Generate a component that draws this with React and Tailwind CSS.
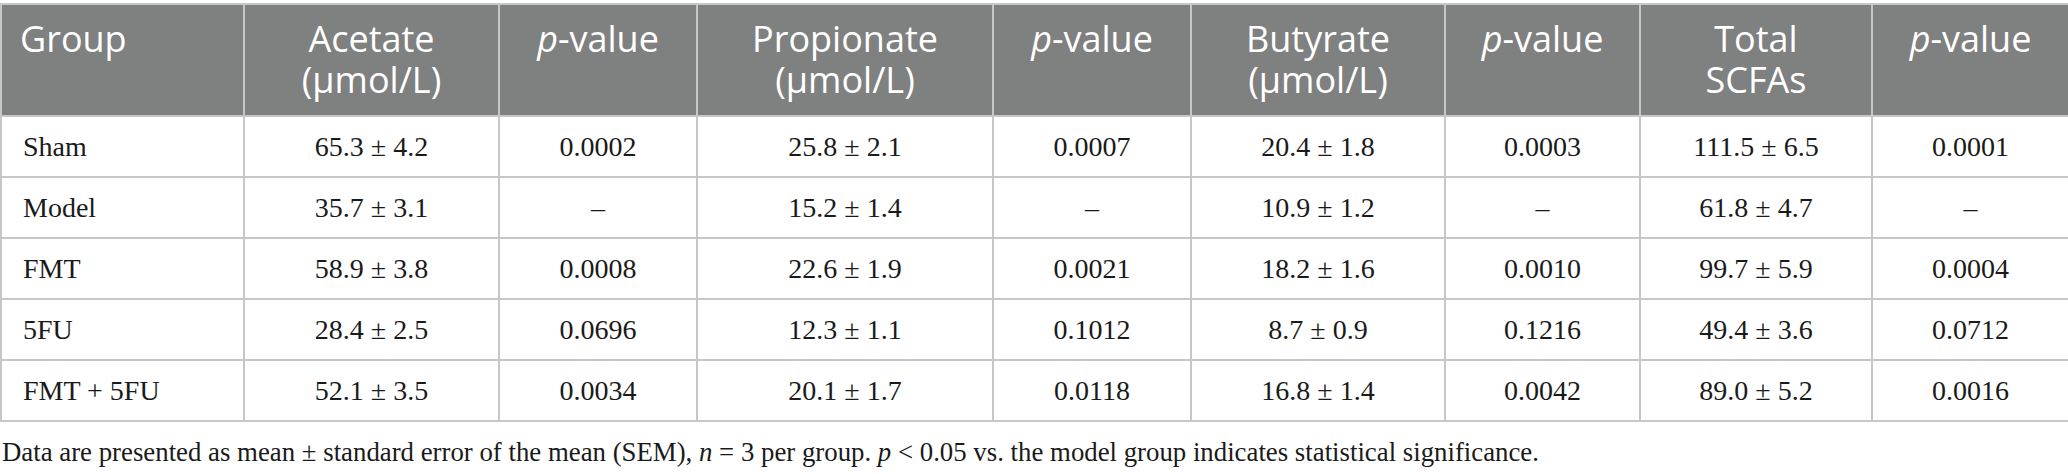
import React from 'react';

const cols = [243, 255, 198, 296, 198, 254, 195, 232, 197];

const headers = [
  { label: ['Group'], left: true },
  { label: ['Acetate', '(\u03bcmol/L)'] },
  { label: 'p' },
  { label: ['Propionate', '(\u03bcmol/L)'] },
  { label: 'p' },
  { label: ['Butyrate', '(\u03bcmol/L)'] },
  { label: 'p' },
  { label: ['Total', 'SCFAs'] },
  { label: 'p' },
];

const rows = [
  ['Sham', '65.3 ± 4.2', '0.0002', '25.8 ± 2.1', '0.0007', '20.4 ± 1.8', '0.0003', '111.5 ± 6.5', '0.0001'],
  ['Model', '35.7 ± 3.1', '–', '15.2 ± 1.4', '–', '10.9 ± 1.2', '–', '61.8 ± 4.7', '–'],
  ['FMT', '58.9 ± 3.8', '0.0008', '22.6 ± 1.9', '0.0021', '18.2 ± 1.6', '0.0010', '99.7 ± 5.9', '0.0004'],
  ['5FU', '28.4 ± 2.5', '0.0696', '12.3 ± 1.1', '0.1012', '8.7 ± 0.9', '0.1216', '49.4 ± 3.6', '0.0712'],
  ['FMT + 5FU', '52.1 ± 3.5', '0.0034', '20.1 ± 1.7', '0.0118', '16.8 ± 1.4', '0.0042', '89.0 ± 5.2', '0.0016'],
];

export default function App() {
  return (
    <div className="w-[2068px] h-[474px] bg-white pt-[3px] overflow-hidden">
      <table className="w-[2068px] table-fixed border-collapse">
        <colgroup>
          {cols.map((w, i) => (
            <col key={i} style={{ width: w }} />
          ))}
        </colgroup>
        <thead>
          <tr className="h-[112px] bg-[#7f8080]">
            {headers.map((h, i) => (
              <th
                key={i}
                className={`border-2 border-[#c6c7c7] align-top pt-[13px] font-normal text-white text-[36px] leading-[41px] font-['Open_Sans',sans-serif] ${
                  h.left ? 'text-left pl-[18px]' : 'text-center'
                }`}
              >
                {h.label === 'p' ? (
                  <span>
                    <i>p</i>-value
                  </span>
                ) : (
                  h.label.map((l, j) => <div key={j}>{l}</div>)
                )}
              </th>
            ))}
          </tr>
        </thead>
        <tbody>
          {rows.map((r, i) => (
            <tr key={i} className="h-[61px]">
              {r.map((c, j) => (
                <td
                  key={j}
                  className={`border-2 border-[#c6c7c7] text-[28px] text-[#1a1a1a] font-['Liberation_Serif',serif] ${
                    j === 0 ? 'text-left pl-[21px]' : 'text-center'
                  }`}
                >
                  {c}
                </td>
              ))}
            </tr>
          ))}
        </tbody>
      </table>
      <p className="mt-[14px] pl-[2px] text-[26.8px] text-[#1a1a1a] font-['Liberation_Serif',serif] leading-[32px]">
        Data are presented as mean ± standard error of the mean (SEM), <i>n</i> = 3 per group. <i>p</i> &lt; 0.05 vs. the model group indicates statistical significance.
      </p>
    </div>
  );
}
